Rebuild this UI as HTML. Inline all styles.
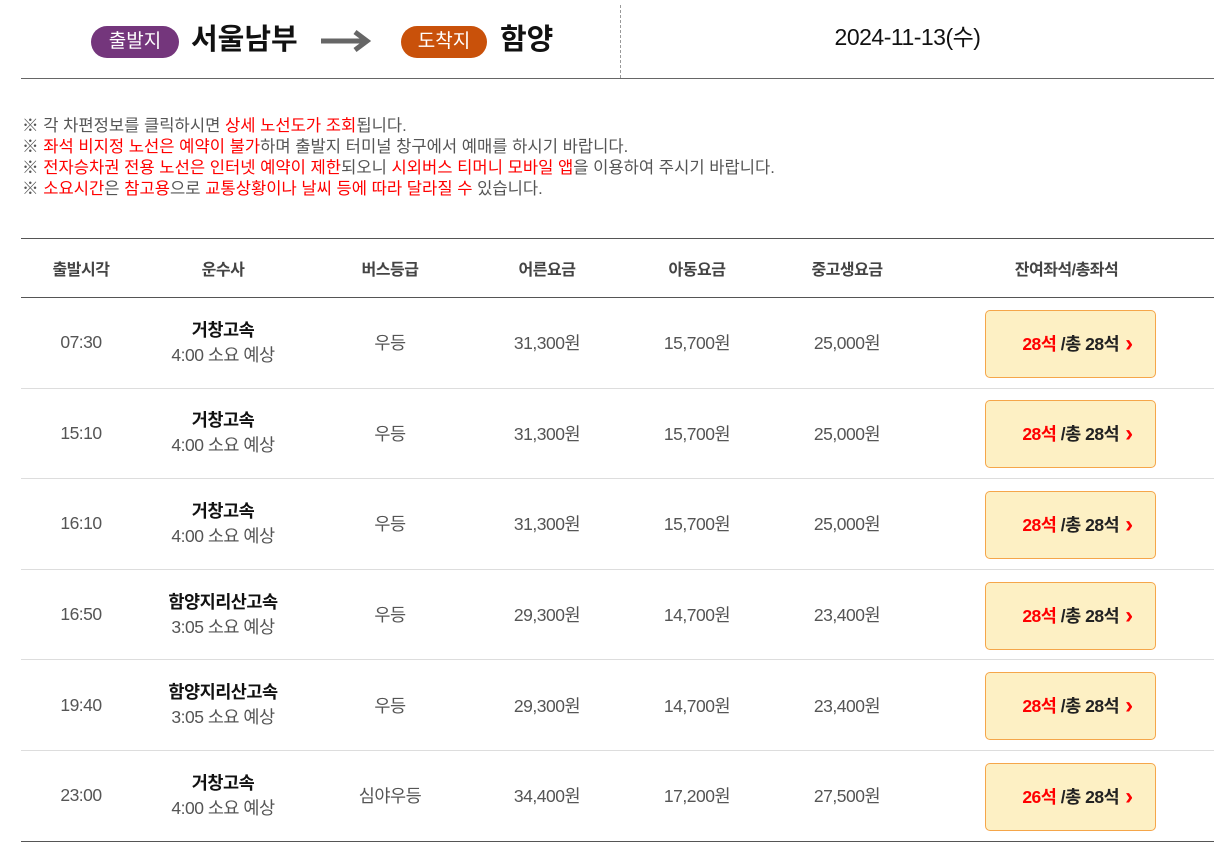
<!DOCTYPE html>
<html><head><meta charset="utf-8"><style>
*{margin:0;padding:0;box-sizing:border-box}
body{width:1214px;height:856px;background:#fff;font-family:"Liberation Sans","Noto Sans CJK KR",sans-serif;color:#333;position:relative;overflow:hidden}
.abs{position:absolute}
.pill{position:absolute;height:32px;border-radius:16px;color:#fff;font-size:19px;line-height:32px;text-align:center}
.city{position:absolute;font-size:29px;font-weight:bold;color:#111;line-height:40px}
.notes{position:absolute;left:22px;top:115px;font-size:16.6px;line-height:21px;color:#555;letter-spacing:0}
.r{color:#f00}
table{position:absolute;left:21px;top:238px;width:1193px;border-collapse:collapse}
th{height:59px;border-top:1px solid #555;border-bottom:1px solid #555;font-size:16px;font-weight:bold;color:#444;letter-spacing:-0.5px}
td{height:90.6px;border-bottom:1px solid #ddd;text-align:center;font-size:17.5px;color:#555;letter-spacing:-0.5px}
tr:last-child td{border-bottom:1px solid #555}
.co b{display:block;color:#111;font-size:17.5px;line-height:25px}
.co span{line-height:25px}
.btn{margin-left:66px;margin-top:2px;width:171px;height:68px;background:#fdf0c4;border:1px solid #f5a64a;border-radius:5px;font-size:17.5px;font-weight:bold;line-height:66px;color:#222;text-align:center;padding-left:14px}
.btn .r{color:#f00}
.btn i{font-style:normal;color:#f00;margin-left:6px;font-size:24px;vertical-align:-1px}
</style></head><body>
<div class="pill" style="left:91px;top:26px;width:88px;background:#74367c">출발지</div>
<div class="city" style="left:191px;top:20px">서울남부</div>
<svg class="abs" style="left:319px;top:30px" width="54" height="22"><path d="M2 11H46" stroke="#666" stroke-width="5"/><path d="M36 2L48 11L36 20" stroke="#666" stroke-width="5" fill="none"/></svg>
<div class="pill" style="left:401px;top:26px;width:86px;background:#c9510a">도착지</div>
<div class="city" style="left:500px;top:20px">함양</div>
<div class="abs" style="left:620px;top:5px;height:73px;border-left:1px dashed #999"></div>
<div class="abs" style="left:611px;top:22px;width:593px;text-align:center;font-size:23px;color:#111;line-height:30px;letter-spacing:-0.5px">2024-11-13(수)</div>
<div class="abs" style="left:21px;top:78px;width:1193px;border-top:1px solid #666"></div>
<div class="notes">
※ 각 차편정보를 클릭하시면 <span class="r">상세 노선도가 조회</span>됩니다.<br>
※ <span class="r">좌석 비지정 노선은 예약이 불가</span>하며 출발지 터미널 창구에서 예매를 하시기 바랍니다.<br>
※ <span class="r">전자승차권 전용 노선은 인터넷 예약이 제한</span>되오니 <span class="r">시외버스 티머니 모바일 앱</span>을 이용하여 주시기 바랍니다.<br>
※ <span class="r">소요시간</span>은 <span class="r">참고용</span>으로 <span class="r">교통상황이나 날씨 등에 따라 달라질 수</span> 있습니다.
</div>
<table>
<colgroup><col style="width:120px"><col style="width:164px"><col style="width:170px"><col style="width:144px"><col style="width:156px"><col style="width:144px"><col></colgroup>
<tr><th>출발시각</th><th>운수사</th><th>버스등급</th><th>어른요금</th><th>아동요금</th><th>중고생요금</th><th>잔여좌석/총좌석</th></tr>
<tr><td>07:30</td><td class="co"><b>거창고속</b><span>4:00 소요 예상</span></td><td>우등</td><td>31,300원</td><td>15,700원</td><td>25,000원</td><td><div class="btn"><span class="r">28석</span> /총 28석<i>›</i></div></td></tr>
<tr><td>15:10</td><td class="co"><b>거창고속</b><span>4:00 소요 예상</span></td><td>우등</td><td>31,300원</td><td>15,700원</td><td>25,000원</td><td><div class="btn"><span class="r">28석</span> /총 28석<i>›</i></div></td></tr>
<tr><td>16:10</td><td class="co"><b>거창고속</b><span>4:00 소요 예상</span></td><td>우등</td><td>31,300원</td><td>15,700원</td><td>25,000원</td><td><div class="btn"><span class="r">28석</span> /총 28석<i>›</i></div></td></tr>
<tr><td>16:50</td><td class="co"><b>함양지리산고속</b><span>3:05 소요 예상</span></td><td>우등</td><td>29,300원</td><td>14,700원</td><td>23,400원</td><td><div class="btn"><span class="r">28석</span> /총 28석<i>›</i></div></td></tr>
<tr><td>19:40</td><td class="co"><b>함양지리산고속</b><span>3:05 소요 예상</span></td><td>우등</td><td>29,300원</td><td>14,700원</td><td>23,400원</td><td><div class="btn"><span class="r">28석</span> /총 28석<i>›</i></div></td></tr>
<tr><td>23:00</td><td class="co"><b>거창고속</b><span>4:00 소요 예상</span></td><td>심야우등</td><td>34,400원</td><td>17,200원</td><td>27,500원</td><td><div class="btn"><span class="r">26석</span> /총 28석<i>›</i></div></td></tr>
</table>
</body></html>
